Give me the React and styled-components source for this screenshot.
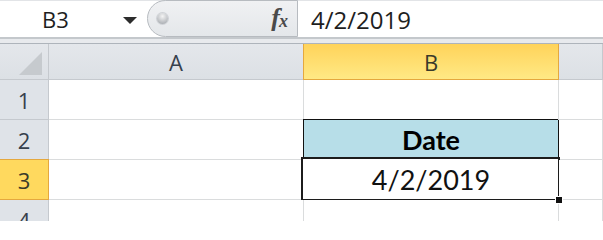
import styled, { createGlobalStyle, css } from 'styled-components';

const GlobalStyle = createGlobalStyle`
  html, body {
    margin: 0;
    padding: 0;
    background: #fff;
  }
`;

const columns = ['A', 'B'];
const rows = [1, 2, 3, 4];

export default function App() {
  return (
    <>
      <GlobalStyle />
      <Sheet>
        <FormulaBar>
          <NameBox>
            <NameText>B3</NameText>
            <DropArrow />
          </NameBox>
          <FxPill>
            <Knob />
            <Fx>
              f<sub>x</sub>
            </Fx>
          </FxPill>
          <FormulaInput>4/2/2019</FormulaInput>
        </FormulaBar>
        <Divider />
        <Grid>
          <Corner>
            <svg width="23" height="23" viewBox="0 0 23 23">
              <polygon points="23,0 23,23 0,23" fill="#c6cace" />
            </svg>
          </Corner>
          {columns.map(c => (
            <ColHeader key={c} $active={c === 'B'}>{c}</ColHeader>
          ))}
          <ColHeader />
          {rows.map(r => (
            <Row key={r} r={r} />
          ))}
        </Grid>
      </Sheet>
    </>
  );
}

function Row({ r }) {
  return (
    <>
      <RowHeader $active={r === 3}>{r}</RowHeader>
      <Cell />
      {r === 2 && <Cell $boxed $header>Date</Cell>}
      {r === 3 && <Cell $boxed $selected>4/2/2019</Cell>}
      {r !== 2 && r !== 3 && <Cell />}
      <Cell />
    </>
  );
}

const Sheet = styled.div`
  width: 603px;
  height: 221px;
  overflow: hidden;
  background: #fff;
`;

const FormulaBar = styled.div`
  display: flex;
  height: 37px;
  background: #fff;
  border-top: 1px solid #e2e4e7;
  box-sizing: border-box;
`;

const NameBox = styled.div`
  width: 147px;
  display: flex;
  align-items: center;
  box-sizing: border-box;
  padding-left: 42px;
`;

const NameText = styled.span`
  font-family: 'Open Sans', 'Noto Sans', sans-serif;
  font-size: 22px;
  color: #1e1e1e;
  width: 81px;
`;

const DropArrow = styled.span`
  width: 0;
  height: 0;
  border-left: 7px solid transparent;
  border-right: 7px solid transparent;
  border-top: 7px solid #2c2c2c;
  margin-top: 2px;
`;

const FxPill = styled.div`
  width: 151px;
  margin-top: -1px;
  display: flex;
  align-items: center;
  justify-content: space-between;
  box-sizing: border-box;
  border: 1px solid #b7bbc0;
  border-radius: 19px 0 0 19px;
  background: linear-gradient(#f0f1f3, #e4e7ea);
  padding: 0 9px 0 9px;
`;

const Knob = styled.span`
  width: 11px;
  height: 11px;
  border-radius: 50%;
  background: radial-gradient(circle at 50% 30%, #f4f4f4, #a9adb2 85%);
  box-shadow: 0 0 0 1px #cfd2d6;
`;

const Fx = styled.span`
  font-family: 'Liberation Serif', 'DejaVu Serif', serif;
  font-style: italic;
  font-weight: bold;
  font-size: 26px;
  color: #4a4a4a;
  line-height: 1;
  margin-top: -2px;

  sub {
    font-size: 18px;
    vertical-align: -1px;
    margin-left: -1px;
  }
`;

const FormulaInput = styled.div`
  flex: 1;
  display: flex;
  align-items: center;
  padding-left: 13px;
  font-family: 'Open Sans', 'Noto Sans', sans-serif;
  font-size: 24px;
  color: #1e1e1e;
`;

const Divider = styled.div`
  height: 7px;
  box-sizing: border-box;
  border-top: 2px solid #c4c8cc;
  border-bottom: 1px solid #aeb4bb;
  background: #e8eaed;
`;

const Grid = styled.div`
  display: grid;
  grid-template-columns: 49px 255px 255px 1fr;
  grid-template-rows: 36px repeat(4, 40px);
`;

const headerBase = css`
  display: flex;
  align-items: center;
  justify-content: center;
  box-sizing: border-box;
  font-family: 'Open Sans', 'Noto Sans', sans-serif;
  font-size: 22px;
  color: #36404c;
  background: linear-gradient(#e4e7eb, #dce0e5);
  border-right: 1px solid #c5c9ce;
  border-bottom: 1px solid #c5c9ce;
`;

const activeHeader = css`
  background: linear-gradient(#ffd35a, #ffe985);
  border-right-color: #e5a83e;
  border-bottom-color: #e5a83e;
  color: #3a3a2a;
`;

const Corner = styled.div`
  ${headerBase};
  align-items: flex-end;
  justify-content: flex-end;
  padding: 0 6px 4px 0;
`;

const ColHeader = styled.div`
  ${headerBase};
  border-left: ${p => (p.$active ? '1px solid #e5a83e' : 'none')};
  margin-left: ${p => (p.$active ? '-1px' : '0')};
  ${p => p.$active && activeHeader};
`;

const RowHeader = styled.div`
  ${headerBase};
  background: #dfe3e8;
  border-top: ${p => (p.$active ? '1px solid #e5a83e' : 'none')};
  margin-top: ${p => (p.$active ? '-1px' : '0')};
  ${p => p.$active && activeHeader};
  ${p => p.$active && 'background: #ffd95e;'}
`;

const Cell = styled.div`
  position: relative;
  display: flex;
  align-items: center;
  justify-content: center;
  box-sizing: border-box;
  background: #fff;
  border-right: 1px solid #dadcdd;
  border-bottom: 1px solid #dadcdd;
  font-family: Lato, 'Liberation Sans', sans-serif;
  font-size: 27px;
  color: #111;

  ${p => p.$boxed && css`
    border-right-color: #111;
    border-bottom-color: #111;
    box-shadow: -1px -1px 0 #111;
  `}

  ${p => p.$header && css`
    background: #b7dee8;
    font-weight: bold;
    color: #000;
  `}

  ${p => p.$selected && css`
    &::after {
      content: '';
      position: absolute;
      top: -3px;
      left: -3px;
      right: -2px;
      bottom: -2px;
      border: 2px solid #1c1c1c;
      box-shadow: inset 0 0 0 1px #fff;
    }

    &::before {
      content: '';
      position: absolute;
      right: -5px;
      bottom: -5px;
      width: 6px;
      height: 6px;
      background: #111;
      border: 1px solid #fff;
      z-index: 1;
    }
  `}
`;
